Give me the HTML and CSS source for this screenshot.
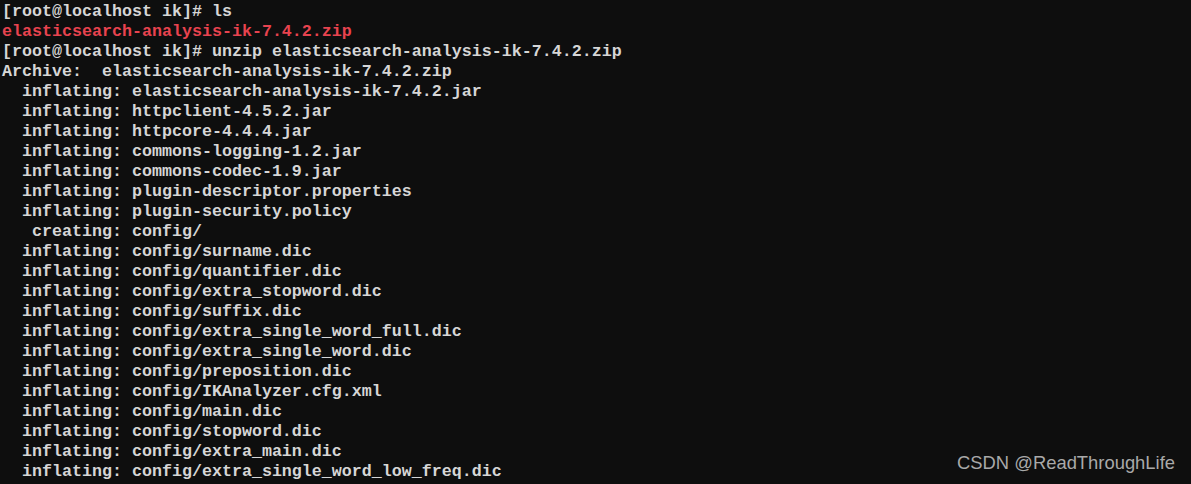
FILE: index.html
```html
<!DOCTYPE html>
<html>
<head>
<meta charset="utf-8">
<link rel="stylesheet" href="styles.css">
</head>
<body>
<div class="term">
<pre class="out">[root@localhost ik]# ls
<span class="red">elasticsearch-analysis-ik-7.4.2.zip</span>
[root@localhost ik]# unzip elasticsearch-analysis-ik-7.4.2.zip
Archive:  elasticsearch-analysis-ik-7.4.2.zip
  inflating: elasticsearch-analysis-ik-7.4.2.jar
  inflating: httpclient-4.5.2.jar
  inflating: httpcore-4.4.4.jar
  inflating: commons-logging-1.2.jar
  inflating: commons-codec-1.9.jar
  inflating: plugin-descriptor.properties
  inflating: plugin-security.policy
   creating: config/
  inflating: config/surname.dic
  inflating: config/quantifier.dic
  inflating: config/extra_stopword.dic
  inflating: config/suffix.dic
  inflating: config/extra_single_word_full.dic
  inflating: config/extra_single_word.dic
  inflating: config/preposition.dic
  inflating: config/IKAnalyzer.cfg.xml
  inflating: config/main.dic
  inflating: config/stopword.dic
  inflating: config/extra_main.dic
  inflating: config/extra_single_word_low_freq.dic
  inflating: config/stopword.dic</pre>
<div class="mark">CSDN @ReadThroughLife</div>
</div>
</body>
</html>
```
FILE: styles.css
```css
html, body {
  margin: 0;
  padding: 0;
  background: #0e0e0e;
  overflow: hidden;
}
.term {
  position: relative;
  width: 1191px;
  height: 484px;
  background: #0e0e0e;
  overflow: hidden;
}
.out {
  margin: 0;
  padding: 2px 0 0 2px;
  font-family: "Liberation Mono", "DejaVu Sans Mono", monospace;
  font-size: 16.67px;
  line-height: 20px;
  color: #d6d6d6;
  font-weight: bold;
  white-space: pre;
}
.red {
  color: #e8434f;
}
.mark {
  position: absolute;
  left: 957px;
  top: 452px;
  font-family: "Liberation Sans", Arial, sans-serif;
  font-size: 18.4px;
  line-height: 22px;
  color: #a9a9a9;
  white-space: nowrap;
}
```
